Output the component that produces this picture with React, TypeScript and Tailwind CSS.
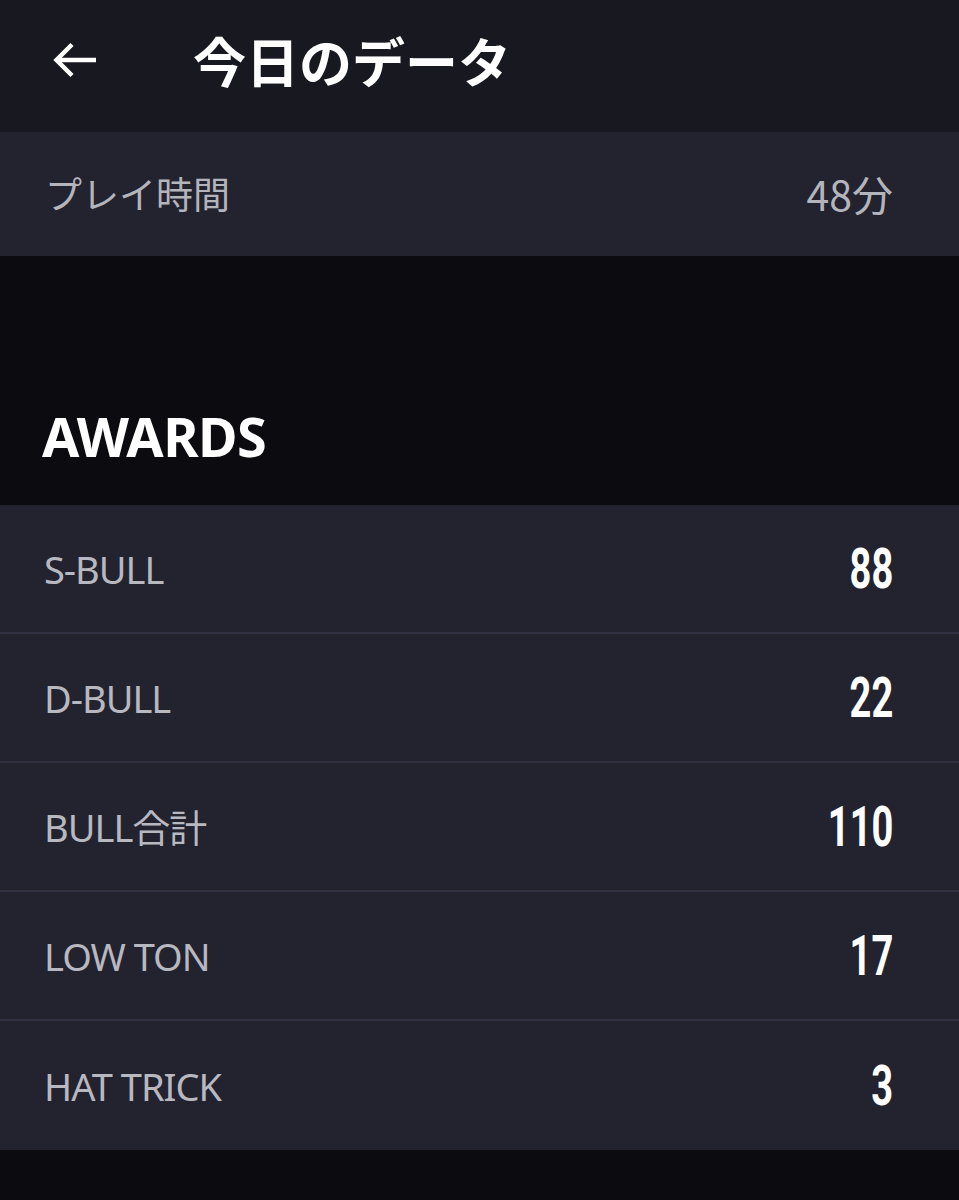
import React from "react";

const rows = [
  { label: "S-BULL", value: "88" },
  { label: "D-BULL", value: "22" },
  { label: "BULL合計", value: "110" },
  { label: "LOW TON", value: "17" },
  { label: "HAT TRICK", value: "3" },
];

export default function App() {
  return (
    <div
      className="w-[959px] h-[1200px] bg-[#0c0c10] flex flex-col"
      style={{ fontFamily: '"Noto Sans", "Noto Sans CJK JP", sans-serif' }}
    >
      <header className="h-[132px] bg-[#181820] flex items-center pl-[52px] pb-[12px]">
        <svg width="46" height="36" viewBox="0 0 46 36" fill="none" stroke="#ffffff" strokeWidth="4.5">
          <path d="M5 18 H44" />
          <path d="M20 2.5 L4.5 18 L20 33.5" strokeLinejoin="miter" />
        </svg>
        <h1 className="ml-[95px] text-[53px] font-bold text-white leading-none" style={{ fontFamily: '"Noto Sans CJK JP", sans-serif' }}>
          今日のデータ
        </h1>
      </header>
      <div className="h-[124px] bg-[#23232f] flex items-center justify-between pl-[45px] pr-[66px] pb-[2px]">
        <span className="text-[37px] text-[#b4b4bc] leading-none" style={{ fontFamily: '"Noto Sans CJK JP", sans-serif' }}>プレイ時間</span>
        <span className="text-[41px] text-[#b4b4bc] leading-none" style={{ fontFamily: '"Noto Sans CJK JP", sans-serif' }}>48分</span>
      </div>
      <div className="h-[249px] flex items-end pl-[42px] pb-[42px]">
        <h2 className="text-[54px] font-bold text-white leading-none tracking-[-0.5px]">AWARDS</h2>
      </div>
      <div className="bg-[#23232f] flex flex-col">
        {rows.map((r, i) => (
          <div
            key={r.label}
            className={`h-[129px] flex items-center justify-between pl-[44px] pr-[66px] ${i < rows.length - 1 ? "border-b-2 border-[#313142]" : ""}`}
          >
            <span className="text-[38px] text-[#b8b8c0] leading-none tracking-[-1px]">{r.label}</span>
            <span
              className="inline-block text-[56px] font-bold text-white leading-none origin-right scale-x-[0.68]"
              style={{ fontFamily: 'Roboto, sans-serif' }}
            >
              {r.value}
            </span>
          </div>
        ))}
      </div>
    </div>
  );
}
